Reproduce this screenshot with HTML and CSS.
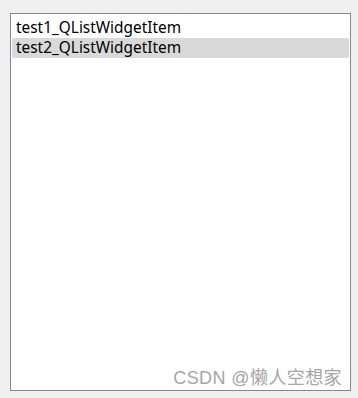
FILE: index.html
```html
<!DOCTYPE html>
<html>
<head>
<meta charset="utf-8">
<link rel="stylesheet" href="styles.css">
</head>
<body>
<div class="list">
  <div class="item">test1_QListWidgetItem</div>
  <div class="item selected">test2_QListWidgetItem</div>
  <div class="watermark">CSDN @懒人空想家</div>
</div>
</body>
</html>
```
FILE: styles.css
```css
html, body {
  margin: 0;
  padding: 0;
  background: #f0f0f0;
  width: 358px;
  height: 398px;
  overflow: hidden;
}
.list {
  position: relative;
  margin: 13px 0 0 10px;
  width: 341px;
  height: 378px;
  border: 1px solid #828790;
  background: #ffffff;
  padding: 4px 1px 0 1px;
  box-sizing: border-box;
  font-family: "Noto Sans", "Noto Sans CJK SC", sans-serif;
  font-size: 15.4px;
  color: #000;
}
.item {
  height: 20px;
  line-height: 20px;
  padding-left: 4px;
  white-space: nowrap;
}
.item.selected {
  background: #d9d9d9;
  border-radius: 2px;
}
.watermark {
  position: absolute;
  right: 8px;
  bottom: 1px;
  line-height: 22px;
  font-family: "Liberation Sans", "Noto Sans CJK SC", sans-serif;
  font-size: 18px;
  letter-spacing: 0.4px;
  color: #a6a6a6;
}
```
